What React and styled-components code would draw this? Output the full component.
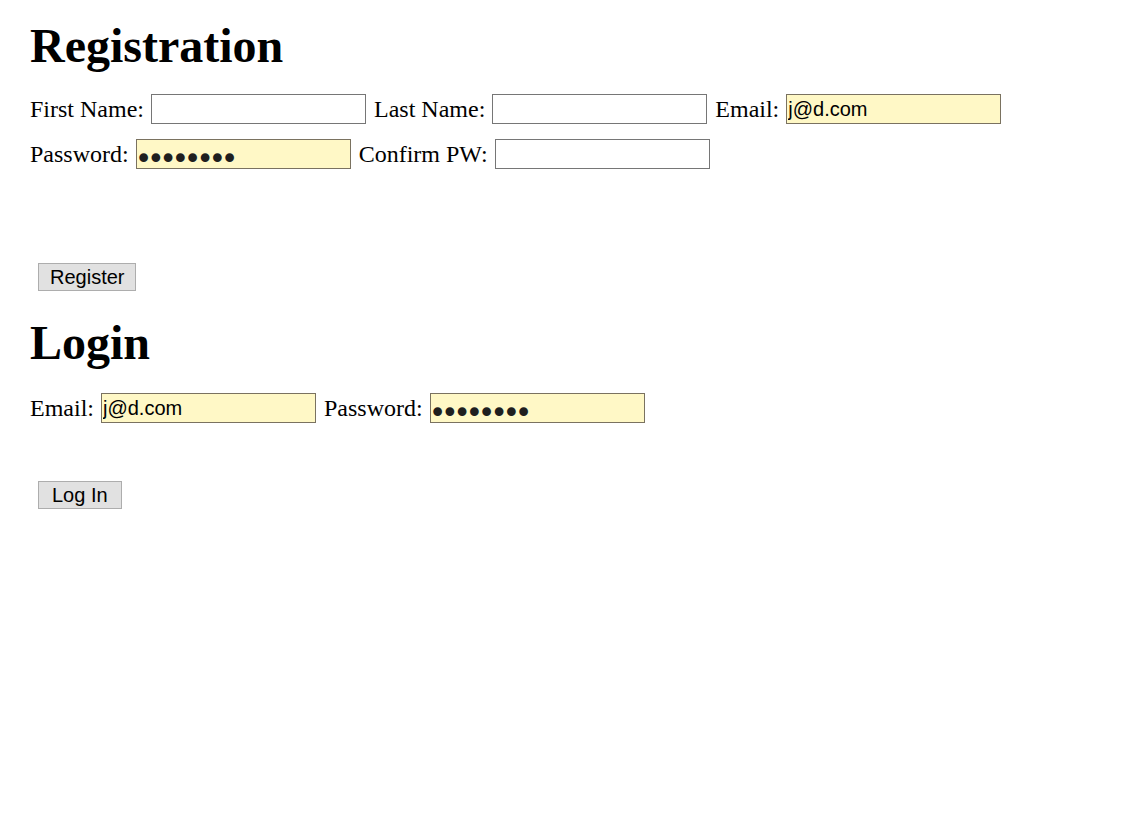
import React from "react";
import styled, { createGlobalStyle } from "styled-components";

const GlobalStyle = createGlobalStyle`
  body {
    margin: 0;
    background: #fff;
    color: #000;
    font-family: "Liberation Serif", "Times New Roman", serif;
    font-size: 24px;
  }
`;

const Page = styled.div`
  padding: 19px 30px 0 30px;
  display: flex;
  flex-direction: column;
  align-items: flex-start;
`;

const Heading = styled.h1`
  margin: ${props => props.top || 0}px 0 0 0;
  font-size: 48px;
  line-height: 53px;
  font-weight: bold;
`;

const Form = styled.form`
  display: flex;
  flex-direction: column;
  align-items: flex-start;
`;

const Row = styled.div`
  display: flex;
  align-items: center;
  height: 30px;
  margin-top: ${props => props.top}px;
`;

const Label = styled.label`
  margin-right: 7px;
  white-space: nowrap;
  line-height: 30px;
`;

const Input = styled.input`
  box-sizing: border-box;
  width: 215px;
  height: 30px;
  margin: 0 8px 0 0;
  padding: 1px 1px 0 1px;
  font-family: "Liberation Sans", Tahoma, sans-serif;
  font-size: 20px;
  color: #000;
  background: ${props => (props.filled ? "#fff8c6" : "#fff")};
  border: 1px solid ${props => (props.filled ? "#7a7260" : "#767676")};
  outline: none;
  border-radius: 0;

  &[type="password"] {
    font-family: "DejaVu Sans", sans-serif;
    font-size: 30px;
    line-height: 19px;
    letter-spacing: -5.4px;
    padding: 9px 1px 0 0;
    text-indent: -2px;
    color: #1f1f1f;
  }
`;

const Button = styled.button`
  box-sizing: border-box;
  margin: ${props => props.top}px 0 0 8px;
  height: 28px;
  padding: 0 ${props => props.pad}px;
  font-family: "Liberation Sans", Tahoma, sans-serif;
  font-size: 20px;
  color: #000;
  background: #e1e1e1;
  border: 1px solid #adadad;
  border-radius: 0;
  line-height: 26px;
`;

function Field({ label, id, type = "text", value }) {
  return (
    <>
      <Label htmlFor={id}>{label}</Label>
      <Input
        id={id}
        name={id}
        type={type}
        defaultValue={value}
        filled={value ? 1 : 0}
      />
    </>
  );
}

export default function App() {
  return (
    <>
      <GlobalStyle />
      <Page>
        <Heading>Registration</Heading>
        <Form onSubmit={e => e.preventDefault()}>
          <Row top={22}>
            <Field label="First Name:" id="first_name" />
            <Field label="Last Name:" id="last_name" />
            <Field label="Email:" id="reg_email" value="j@d.com" />
          </Row>
          <Row top={15}>
            <Field label="Password:" id="reg_pw" type="password" value="password" />
            <Field label="Confirm PW:" id="confirm_pw" type="password" />
          </Row>
          <Button top={94} pad={11} type="submit">Register</Button>
        </Form>

        <Heading top={25}>Login</Heading>
        <Form onSubmit={e => e.preventDefault()}>
          <Row top={24}>
            <Field label="Email:" id="login_email" value="j@d.com" />
            <Field label="Password:" id="login_pw" type="password" value="password" />
          </Row>
          <Button top={58} pad={13} type="submit">Log In</Button>
        </Form>
      </Page>
    </>
  );
}
